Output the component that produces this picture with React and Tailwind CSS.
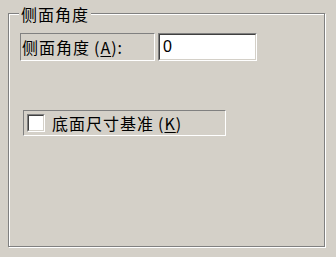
import React from 'react';

const font = { fontFamily: '"Noto Sans CJK SC", "Noto Sans", sans-serif' };

export default function App() {
  return (
    <div className="w-[336px] h-[257px] bg-[#d4d0c8] pt-[13px] pl-[8px] text-black" style={font}>
      {/* group box, etched */}
      <div className="relative w-[317px] h-[234px] border border-[#808080] shadow-[1px_1px_0_#fff,inset_1px_1px_0_#fff]">
        <div className="absolute left-[10px] top-[-10px] px-[2px] bg-[#d4d0c8] text-[16px] leading-[20px] tracking-[1px]">
          侧面角度
        </div>

        <div className="flex items-start pl-[11px] pt-[19px] gap-[3px]">
          <div className="w-[135px] h-[28px] border border-t-[#808080] border-l-[#808080] border-b-white border-r-white flex items-center pl-[1px] text-[16px] leading-none tracking-[1px] whitespace-nowrap">
            侧面角度<span className="ml-[4px]">(</span><span className="underline underline-offset-2">A</span>):
          </div>
          <div className="w-[99px] h-[28px] border border-t-[#808080] border-l-[#808080] border-b-white border-r-white">
            <div className="w-full h-full border border-t-[#404040] border-l-[#404040] border-b-[#d4d0c8] border-r-[#d4d0c8] bg-white flex items-center pl-[3px] text-[16px] leading-none" style={{ fontFamily: '"Liberation Sans", sans-serif' }}>
              0
            </div>
          </div>
        </div>

        <div className="ml-[14px] mt-[49px] w-[203px] h-[26px] border border-t-[#808080] border-l-[#808080] border-b-white border-r-white flex items-center pl-[3px] gap-[7px]">
          <div className="w-[18px] h-[18px] border border-t-[#808080] border-l-[#808080] border-b-white border-r-white">
            <div className="w-full h-full border border-t-[#404040] border-l-[#404040] border-b-[#d4d0c8] border-r-[#d4d0c8] bg-white" />
          </div>
          <div className="text-[16px] leading-none tracking-[1px] whitespace-nowrap">
            底面尺寸基准<span className="ml-[4px]">(</span><span className="underline underline-offset-2">K</span>)
          </div>
        </div>
      </div>
    </div>
  );
}
